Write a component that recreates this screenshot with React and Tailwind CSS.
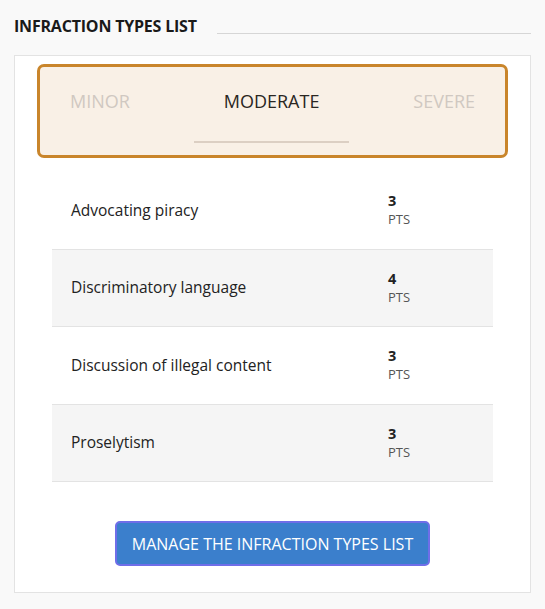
const infractions = [
  { name: 'Advocating piracy', points: 3 },
  { name: 'Discriminatory language', points: 4 },
  { name: 'Discussion of illegal content', points: 3 },
  { name: 'Proselytism', points: 3 },
];

const tabs = ['Minor', 'Moderate', 'Severe'];

const App = () => {
  const active = 'Moderate';

  return (
    <div className="min-h-screen bg-[#f9f9f9] px-[14px] pt-[14px] pb-[16px] font-['Open_Sans',sans-serif] text-[#222]">
      <div className="flex items-center">
        <h2 className="text-[16px] leading-[24px] font-bold uppercase tracking-[-0.2px] text-[#1a1a1a]">Infraction types list</h2>
        <div className="ml-5 mt-[14px] h-px flex-1 bg-[#d6d6d6]"></div>
      </div>

      <div className="mt-[17px] border border-[#e3e3e3] bg-white px-[22px] pt-[8px] pb-[26px]">
        <div className="flex justify-between rounded-[7px] border-[3px] border-[#c9852b] bg-[#f9f0e6] pt-[21px] pb-[12px]">
          {tabs.map((tab) => (
            <button
              key={tab}
              className={`px-[30px] pb-[26px] text-[18px] uppercase border-b-2 ${
                tab === active ? 'border-[#dccfc3] text-[#2a2622]' : 'border-transparent text-[#d0c8c1]'
              }`}
            >
              {tab}
            </button>
          ))}
        </div>

        <div className="mx-[15px] mt-[14px]">
          {infractions.map((item, i) => (
            <div
              key={item.name}
              className={`grid h-[77.5px] grid-cols-[1fr_105px] items-center border-b border-[#e3e3e3] pl-[19px] ${
                i % 2 === 1 ? 'bg-[#f5f5f5]' : 'bg-white'
              }`}
            >
              <span className="text-[15.5px] text-[#222]">{item.name}</span>
              <div className="flex flex-col leading-[18px]">
                <span className="text-[14.5px] font-bold text-[#222]">{item.points}</span>
                <span className="text-[13px] text-[#555]">PTS</span>
              </div>
            </div>
          ))}
        </div>

        <div className="mt-[39px] flex justify-center">
          <button className="h-[45px] rounded-[5px] border-2 border-[#6f6ee8] bg-[#3b7fcc] px-[15px] text-[16px] font-medium uppercase text-white">
            Manage the infraction types list
          </button>
        </div>
      </div>
    </div>
  );
};

export default App;
